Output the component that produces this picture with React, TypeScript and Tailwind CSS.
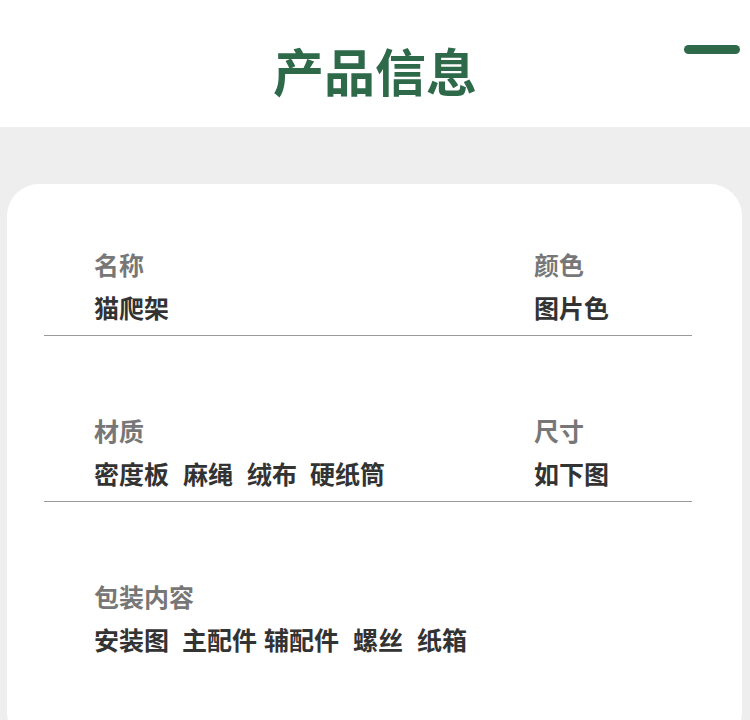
import React from "react";

const font = { fontFamily: '"Noto Sans CJK SC", "Noto Sans", sans-serif' };

function Item({ label, value }: { label: string; value: React.ReactNode }) {
  return (
    <div className="flex flex-col">
      <div className="text-[25px] leading-[25px] font-bold text-[#777777] h-[25px]">{label}</div>
      <div className="mt-[18px] text-[25px] leading-[25px] font-bold text-[#333333] flex">{value}</div>
    </div>
  );
}

export default function App() {
  return (
    <div className="w-[750px] h-[720px] overflow-hidden bg-[#eeeeee]" style={font}>
      <div className="relative h-[127px] bg-white">
        <div className="pt-[41px] text-center text-[51px] leading-[58px] font-bold text-[#2e6a4a]">产品信息</div>
        <div className="absolute left-[684px] top-[45px] w-[56px] h-[9px] rounded-full bg-[#2e6a4a]" />
      </div>
      <div className="mt-[57px] ml-[7px] w-[735px] h-[560px] bg-white rounded-[32px] pt-[68px]">
        <div className="ml-[37px] w-[648px]">
          <div className="flex border-b border-[#9a9a9a] pb-[15px]">
            <div className="pl-[50px] w-[490px]"><Item label="名称" value="猫爬架" /></div>
            <div><Item label="颜色" value="图片色" /></div>
          </div>
          <div className="flex border-b border-[#9a9a9a] pb-[15px] mt-[82px]">
            <div className="pl-[50px] w-[490px]">
              <Item
                label="材质"
                value={
                  <>
                    <span>密度板</span>
                    <span className="ml-[14px]">麻绳</span>
                    <span className="ml-[14px]">绒布</span>
                    <span className="ml-[13px]">硬纸筒</span>
                  </>
                }
              />
            </div>
            <div><Item label="尺寸" value="如下图" /></div>
          </div>
          <div className="flex mt-[82px]">
            <div className="pl-[50px]">
              <Item
                label="包装内容"
                value={
                  <>
                    <span>安装图</span>
                    <span className="ml-[13px]">主配件</span>
                    <span className="ml-[7px]">辅配件</span>
                    <span className="ml-[14px]">螺丝</span>
                    <span className="ml-[14px]">纸箱</span>
                  </>
                }
              />
            </div>
          </div>
        </div>
      </div>
    </div>
  );
}
